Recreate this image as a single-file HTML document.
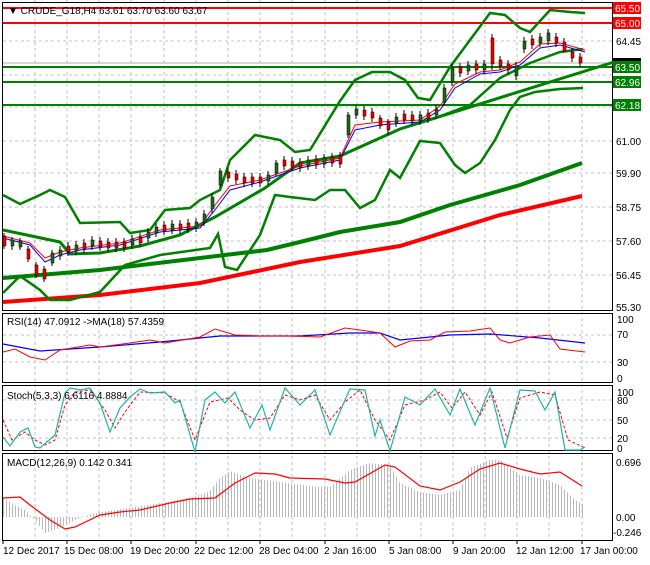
<!DOCTYPE html>
<html><head><meta charset="utf-8"><style>
body{margin:0;background:#fff;width:650px;height:560px;overflow:hidden;font-family:"Liberation Sans",sans-serif}
svg text{font-family:"Liberation Sans",sans-serif;font-size:10px;fill:#000}
</style></head><body>
<svg width="650" height="560" viewBox="0 0 650 560" xmlns="http://www.w3.org/2000/svg">
<defs>
<pattern id="hp" width="3" height="10" patternUnits="userSpaceOnUse"><rect x="0" y="0" width="1" height="10" fill="#b8b8b8"/></pattern>
</defs>
<rect width="650" height="560" fill="#fff"/>
<g stroke="#c0c0c0" stroke-dasharray="3,3" stroke-width="1">
<path d="M35 0V540M67 0V540M99 0V540M131 0V540M164 0V540M196 0V540M228 0V540M260 0V540M292 0V540M325 0V540M357 0V540M389 0V540M421 0V540M453 0V540M485 0V540M517 0V540M549 0V540M582 0V540"/>
<path d="M3 41H612M3 75H612M3 107H612M3 141H612M3 173H612M3 207H612M3 241H612M3 275H612"/>
<path d="M3 335H612M3 362H612M3 400H612M3 420H612M3 438H612"/>
</g>
<g stroke="#000" fill="none" stroke-width="1">
<rect x="2.5" y="2.5" width="610" height="308"/>
<rect x="2.5" y="313.5" width="610" height="69"/>
<rect x="2.5" y="385.5" width="610" height="65"/>
<rect x="2.5" y="453.5" width="610" height="87"/>
</g>
<line x1="3" y1="63" x2="612" y2="63" stroke="#b0b0b0"/>
<line x1="3" y1="8" x2="612" y2="8" stroke="#f00" stroke-width="2"/>
<line x1="3" y1="23" x2="612" y2="23" stroke="#f00" stroke-width="2"/>
<line x1="3" y1="67" x2="612" y2="67" stroke="#008000" stroke-width="2"/>
<line x1="3" y1="82" x2="612" y2="82" stroke="#008000" stroke-width="2"/>
<line x1="3" y1="105" x2="612" y2="105" stroke="#008000" stroke-width="2"/>
<polyline fill="none" stroke="#f00" stroke-width="4" points="3,302 100,295 200,283 300,262 400,246 500,215 582,196"/>
<polyline fill="none" stroke="#008000" stroke-width="4" points="3,278 100,270 200,258 267,250 300,242 340,232 400,222 450,205 520,185 582,163"/>
<polyline fill="none" stroke="#008000" stroke-width="3" points="3,230 60,242 70,254 100,253 140,246 180,235 215,217 265,188 300,163 340,156 400,129 614,62"/>
<polyline fill="none" stroke="#008000" stroke-width="2.5" points="3,195 20,204 40,195 50,190 65,197 80,223 120,222 130,233 150,230 165,210 190,208 200,200 220,190 230,160 255,135 280,140 295,152 310,150 340,101 355,80 372,72 390,72 405,80 418,98 430,100 450,67 470,40 490,13 505,15 520,28 530,32 550,10 570,12 585,13"/>
<polyline fill="none" stroke="#008000" stroke-width="2.5" points="3,293 20,276 40,290 50,300 70,300 100,292 125,265 160,255 210,248 218,234 225,267 237,270 260,235 275,195 290,197 315,200 330,190 345,190 360,208 375,200 390,170 400,178 420,141 440,143 455,165 465,173 480,163 495,140 510,110 520,97 535,92 560,89 583,88"/>
<polyline fill="none" stroke="#008000" stroke-width="2.5" points="430,120 470,105 500,78 530,63 560,52 583,49"/>
<polyline fill="none" stroke="#00f" stroke-width="1" points="3,238 30,245 45,262 60,255 80,250 120,245 160,232 200,228 215,210 230,190 260,182 300,168 340,160 355,130 380,125 420,122 440,110 455,88 480,74 500,72 520,65 540,48 560,45 585,52"/>
<polyline fill="none" stroke="#f00" stroke-width="1" points="3,236 30,243 45,258 60,252 80,248 120,243 160,230 200,226 215,205 230,186 260,180 300,166 340,158 355,125 380,122 420,120 440,106 455,84 480,72 500,70 520,62 540,44 560,43 585,50"/>
<!-- candle wicks -->
<path stroke="#000" stroke-width="1" fill="none" d="M4 233V249M12 237V250M20 238V250M28 246V262M36 262V278M44 266V282M52 250V266M60 246V260M68 242V256M76 241V255M84 239V253M92 236V250M100 237V251M108 238V252M116 238V252M124 238V252M132 235V249M140 233V247M148 228V242M156 223V237M164 221V235M172 220V234M180 220V234M188 219V233M196 218V232M204 210V226M212 193V213M220 168V188M228 168V182M236 170V184M244 173V187M252 173V187M260 173V187M268 171V185M276 160V176M284 156V170M292 157V171M300 158V172M308 156V170M316 155V169M324 154V168M332 153V167M340 152V168M348 112V138M356 105V119M364 106V120M372 108V122M380 115V129M388 119V135M396 113V127M404 110V124M412 111V125M420 111V125M428 109V123M436 105V119M444 84V106M452 64V86M460 63V77M468 61V75M476 60V74M484 60V74M492 34V70M500 56V70M508 60V74M516 62V80M524 37V53M532 35V49M540 33V47M548 29V45M556 33V47M564 38V52M572 48V62M580 53V67"/>
<g fill="#1a6b1a" stroke="#000" stroke-width="0.5">
<rect x="11" y="240" width="3" height="6"/><rect x="19" y="241" width="3" height="6"/><rect x="51" y="253" width="3" height="10"/><rect x="59" y="250" width="3" height="6"/><rect x="75" y="245" width="3" height="6"/><rect x="91" y="240" width="3" height="6"/><rect x="131" y="239" width="3" height="6"/><rect x="147" y="232" width="3" height="6"/><rect x="155" y="227" width="3" height="6"/><rect x="171" y="224" width="3" height="6"/><rect x="195" y="222" width="3" height="6"/><rect x="203" y="214" width="3" height="8"/><rect x="211" y="197" width="3" height="12"/><rect x="219" y="171" width="3" height="14"/><rect x="267" y="175" width="3" height="6"/><rect x="275" y="163" width="3" height="10"/><rect x="307" y="160" width="3" height="6"/><rect x="323" y="158" width="3" height="6"/><rect x="347" y="115" width="3" height="20"/><rect x="355" y="109" width="3" height="6"/><rect x="395" y="117" width="3" height="6"/><rect x="419" y="115" width="3" height="6"/><rect x="435" y="109" width="3" height="6"/><rect x="443" y="88" width="3" height="14"/><rect x="451" y="68" width="3" height="14"/><rect x="467" y="65" width="3" height="6"/><rect x="483" y="64" width="3" height="6"/><rect x="515" y="66" width="3" height="10"/><rect x="523" y="41" width="3" height="8"/><rect x="539" y="37" width="3" height="6"/><rect x="547" y="33" width="3" height="8"/>
</g>
<g fill="#e00" stroke="#000" stroke-width="0.5">
<rect x="3" y="236" width="3" height="10"/><rect x="27" y="249" width="3" height="10"/><rect x="35" y="265" width="3" height="10"/><rect x="43" y="269" width="3" height="10"/><rect x="67" y="246" width="3" height="6"/><rect x="83" y="243" width="3" height="6"/><rect x="99" y="241" width="3" height="6"/><rect x="107" y="242" width="3" height="6"/><rect x="115" y="242" width="3" height="6"/><rect x="123" y="242" width="3" height="6"/><rect x="139" y="237" width="3" height="6"/><rect x="163" y="225" width="3" height="6"/><rect x="179" y="224" width="3" height="6"/><rect x="187" y="223" width="3" height="6"/><rect x="227" y="172" width="3" height="6"/><rect x="235" y="174" width="3" height="6"/><rect x="243" y="177" width="3" height="6"/><rect x="251" y="177" width="3" height="6"/><rect x="259" y="177" width="3" height="6"/><rect x="283" y="160" width="3" height="6"/><rect x="291" y="161" width="3" height="6"/><rect x="299" y="162" width="3" height="6"/><rect x="315" y="159" width="3" height="6"/><rect x="331" y="157" width="3" height="6"/><rect x="339" y="156" width="3" height="8"/><rect x="363" y="110" width="3" height="6"/><rect x="371" y="112" width="3" height="6"/><rect x="379" y="118" width="3" height="8"/><rect x="387" y="122" width="3" height="8"/><rect x="403" y="114" width="3" height="6"/><rect x="411" y="115" width="3" height="6"/><rect x="427" y="113" width="3" height="6"/><rect x="459" y="67" width="3" height="6"/><rect x="475" y="64" width="3" height="6"/><rect x="491" y="38" width="3" height="26"/><rect x="499" y="60" width="3" height="6"/><rect x="507" y="64" width="3" height="6"/><rect x="531" y="39" width="3" height="6"/><rect x="555" y="37" width="3" height="6"/><rect x="563" y="42" width="3" height="10"/><rect x="571" y="52" width="3" height="6"/><rect x="579" y="57" width="3" height="6"/>
</g>
<!-- RSI -->
<polyline fill="none" stroke="#00f" stroke-width="1.2" points="3,344 40,351 100,347 160,342 220,336 300,336 350,333 380,333 400,340 450,335 490,334 540,338 585,343"/>
<polyline fill="none" stroke="#f00" stroke-width="1" points="3,352 15,349 30,357 45,360 60,350 90,345 100,347 130,343 150,340 165,343 200,337 215,329 235,335 260,336 290,336 320,337 345,328 360,330 380,333 395,347 410,341 430,340 445,332 470,331 490,328 500,340 510,343 530,337 550,335 560,349 585,352"/>
<!-- Stoch -->
<polyline fill="none" stroke="#f00" stroke-width="1" stroke-dasharray="3,2" points="3,420 12,440 25,432 35,440 45,445 55,440 65,405 75,392 90,390 105,410 115,428 125,412 140,392 165,393 180,402 195,440 210,402 228,398 240,410 255,420 270,418 285,395 300,400 315,395 330,420 345,402 360,390 375,420 390,440 405,405 425,400 440,392 452,408 465,392 480,415 492,392 507,438 520,398 540,392 555,395 568,440 585,448"/>
<polyline fill="none" stroke="#20b2aa" stroke-width="1.2" points="3,437 10,446 20,432 28,428 35,447 40,448 48,441 55,435 65,393 70,388 80,390 90,388 100,403 110,432 120,408 130,397 140,389 150,393 165,392 175,403 180,400 195,452 205,400 215,392 225,403 235,392 250,428 262,405 270,430 285,388 300,405 315,390 330,435 345,400 350,389 365,390 375,436 380,420 390,451 405,397 420,405 435,389 450,415 460,389 475,425 490,388 505,448 520,390 535,391 545,410 555,392 565,450 580,450 585,447"/>
<!-- MACD -->
<polygon fill="url(#hp)" points="3,517 3,498 15,505 25,510 35,520 45,533 55,530 65,525 80,518 100,512 130,508 160,503 190,498 210,491 220,478 230,471 250,478 280,482 310,486 330,487 350,470 370,463 390,465 400,483 420,492 440,495 460,490 470,468 490,460 500,460 520,475 540,478 560,485 575,500 585,505 585,517"/>
<polyline fill="none" stroke="#f00" stroke-width="1.2" points="3,498 20,497 30,505 50,520 65,529 75,527 100,515 120,512 140,510 170,503 190,499 215,498 235,483 255,473 275,474 290,478 325,479 345,483 355,482 385,465 395,467 420,486 440,490 460,482 480,469 500,463 520,469 540,474 560,472 582,486"/>
<text x="8" y="14" font-size="9">▼ CRUDE_G18,H4  63.61 63.70 63.60 63.67</text>
<text x="7" y="325">RSI(14) 47.0912  -&gt;MA(18) 57.4359</text>
<text x="7" y="399">Stoch(5,3,3) 6.6116 4.8884</text>
<text x="7" y="466">MACD(12,26,9) 0.142 0.341</text>
<rect x="613" y="2" width="28" height="12" fill="#f00"/><text x="615" y="12" style="fill:#fff">65.50</text>
<rect x="613" y="17" width="28" height="12" fill="#f00"/><text x="615" y="27" style="fill:#fff">65.00</text>
<text x="616" y="45">64.45</text>
<rect x="613" y="58" width="28" height="6" fill="#000"/>
<rect x="613" y="61" width="28" height="12" fill="#008000"/><text x="615" y="71" style="fill:#fff">63.50</text>
<rect x="613" y="76" width="28" height="12" fill="#008000"/><text x="615" y="86" style="fill:#fff">62.96</text>
<rect x="613" y="99" width="28" height="12" fill="#008000"/><text x="615" y="109" style="fill:#fff">62.18</text>
<text x="616" y="145">61.00</text><text x="616" y="177">59.90</text><text x="616" y="211">58.75</text><text x="616" y="245">57.60</text><text x="616" y="279">56.45</text><text x="616" y="311">55.30</text>
<text x="617" y="323">100</text><text x="617" y="338">70</text><text x="617" y="366">30</text><text x="617" y="382">0</text>
<text x="617" y="396">100</text><text x="617" y="404">80</text><text x="617" y="424">50</text><text x="617" y="442">20</text><text x="617" y="452">0</text>
<text x="616" y="466">0.696</text><text x="616" y="521">0.00</text><text x="613" y="536">-0.246</text>
<g stroke="#000"><path d="M3 540V544M67 540V544M131 540V544M196 540V544M260 540V544M325 540V544M389 540V544M453 540V544M517 540V544M582 540V544"/></g>
<text x="3" y="554">12 Dec 2017</text><text x="64" y="554">15 Dec 08:00</text><text x="130" y="554">19 Dec 20:00</text><text x="194" y="554">22 Dec 12:00</text><text x="259" y="554">28 Dec 04:00</text><text x="324" y="554">2 Jan 16:00</text><text x="389" y="554">5 Jan 08:00</text><text x="453" y="554">9 Jan 20:00</text><text x="516" y="554">12 Jan 12:00</text><text x="580" y="554">17 Jan 00:00</text>
</svg>
</body></html>
